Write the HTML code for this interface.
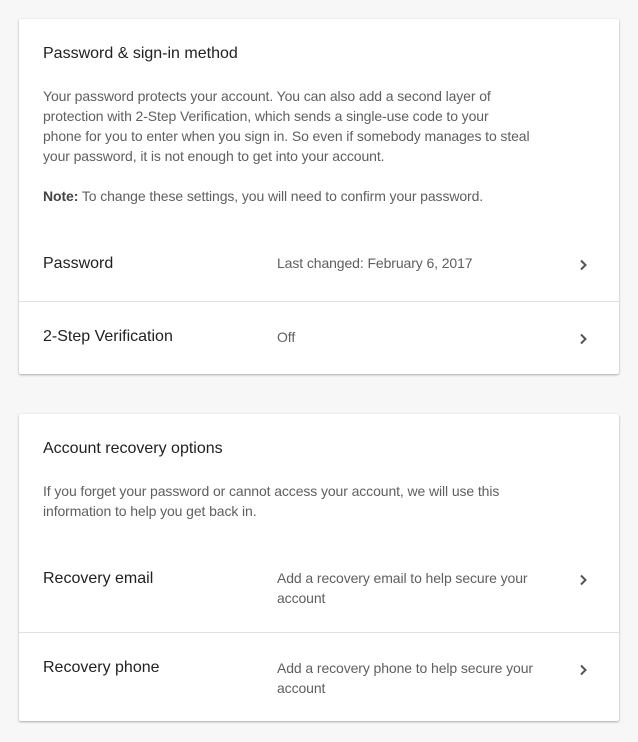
<!DOCTYPE html>
<html><head><style>
body{margin:0;background:#f7f7f7;font-family:"Liberation Sans",sans-serif;width:638px;height:742px;overflow:hidden}
.card{position:absolute;left:19px;width:600px;background:#fff;border-radius:2px;box-shadow:0 1px 2px rgba(0,0,0,.3),0 0 1px rgba(0,0,0,.1)}
.t{position:absolute;left:24px;font-size:16px;color:#212121;line-height:20px}
.p{position:absolute;left:24px;width:540px;font-size:14px;color:#5f5f5f;line-height:20px;letter-spacing:-0.1px;white-space:nowrap}
.row{position:absolute;left:0;width:600px}
.row.b{border-top:1px solid #e0e0e0}
.lab{position:absolute;left:24px;font-size:16px;color:#212121;line-height:20px}
.val{position:absolute;left:258px;width:270px;font-size:14px;color:#5f5f5f;line-height:20px;letter-spacing:-0.1px}
.chev{position:absolute;left:559px;width:10px;height:12px}
</style></head><body>
<div class="card" style="top:19px;height:355px">
 <div class="t" style="top:25px">Password &amp; sign-in method</div>
 <div class="p" style="top:67px">Your password protects your account. You can also add a second layer of<br>protection with 2-Step Verification, which sends a single-use code to your<br>phone for you to enter when you sign in. So even if somebody manages to steal<br>your password, it is not enough to get into your account.</div>
 <div class="p" style="top:167px"><b style="color:#444">Note:</b> To change these settings, you will need to confirm your password.</div>
 <div class="row" style="top:209px;height:73px">
  <div class="lab" style="top:26px">Password</div>
  <div class="val" style="top:25px">Last changed: February 6, 2017</div>
  <svg class="chev" style="top:31px" viewBox="0 0 10 12"><path d="M3 1.5l4.5 4.5L3 10.5" stroke="#555" stroke-width="2" fill="none"/></svg>
 </div>
 <div class="row b" style="top:282px;height:73px">
  <div class="lab" style="top:25px">2-Step Verification</div>
  <div class="val" style="top:25px">Off</div>
  <svg class="chev" style="top:31px" viewBox="0 0 10 12"><path d="M3 1.5l4.5 4.5L3 10.5" stroke="#555" stroke-width="2" fill="none"/></svg>
 </div>
</div>
<div class="card" style="top:414px;height:307px">
 <div class="t" style="top:25px">Account recovery options</div>
 <div class="p" style="top:67px">If you forget your password or cannot access your account, we will use this<br>information to help you get back in.</div>
 <div class="row" style="top:129px;height:89px">
  <div class="lab" style="top:26px">Recovery email</div>
  <div class="val" style="top:25px">Add a recovery email to help secure your account</div>
  <svg class="chev" style="top:31px" viewBox="0 0 10 12"><path d="M3 1.5l4.5 4.5L3 10.5" stroke="#555" stroke-width="2" fill="none"/></svg>
 </div>
 <div class="row b" style="top:218px;height:89px">
  <div class="lab" style="top:25px">Recovery phone</div>
  <div class="val" style="top:25px">Add a recovery phone to help secure your account</div>
  <svg class="chev" style="top:31px" viewBox="0 0 10 12"><path d="M3 1.5l4.5 4.5L3 10.5" stroke="#555" stroke-width="2" fill="none"/></svg>
 </div>
</div>
</body></html>
